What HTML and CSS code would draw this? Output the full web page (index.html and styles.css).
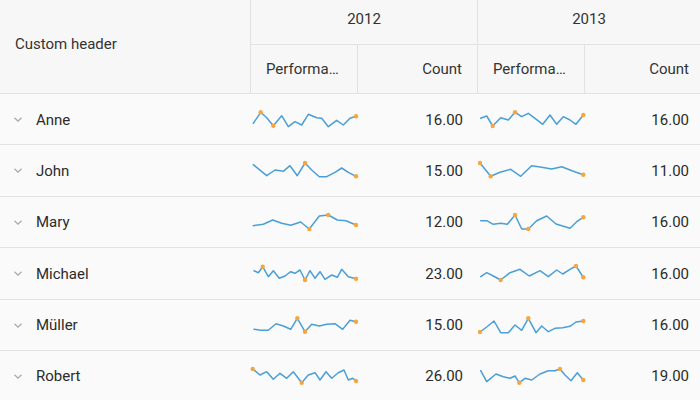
FILE: index.html
```html
<!DOCTYPE html>
<html>
<head>
<meta charset="utf-8">
<link rel="stylesheet" href="styles.css">
</head>
<body>
<div class="grid">
  <div class="head">
    <div class="hc corner">Custom header</div>
    <div class="hc year y1">2012</div>
    <div class="hc year y2">2013</div>
    <div class="hc sub left">Performance</div>
    <div class="hc sub right">Count</div>
    <div class="hc sub left">Performance</div>
    <div class="hc sub right last">Count</div>
  </div>
  <div class="body">
    <div class="row">
      <div class="name"><svg class="chev" width="8" height="5" viewBox="0 0 8 5"><path d="M0.5 0.8 L4 4.2 L7.5 0.8"/></svg><span>Anne</span></div>
      <div class="spark"><svg viewBox="1 1 107 51"><polyline points="3.3,30.3 10.7,19.3 16.7,24.7 23.3,32.7 31.7,22.7 38.3,33.7 45,28.7 51.7,32 58.3,21.3 66.7,24.7 71.7,25.3 78.3,33.7 86.7,27.3 93.3,32 100,25.3 106,23.3"/><circle cx="10.7" cy="19.3" r="2.2"/><circle cx="23.3" cy="32.7" r="2.2"/><circle cx="106" cy="23.3" r="2.2"/></svg></div>
      <div class="num">16.00</div>
      <div class="spark"><svg viewBox="1 1 107 51"><polyline points="3.7,25.3 9.7,23 15.7,33 23.7,24.7 31.3,27 38,19.3 44.7,23.7 51.3,20.3 58,25.3 65.7,31.3 73,22 79.7,31.3 86.3,23.7 93,27 99,31.3 106.3,22"/><circle cx="15.7" cy="33" r="2.2"/><circle cx="38" cy="19.3" r="2.2"/><circle cx="106.3" cy="22" r="2.2"/></svg></div>
      <div class="num last">16.00</div>
    </div>
    <div class="row">
      <div class="name"><svg class="chev" width="8" height="5" viewBox="0 0 8 5"><path d="M0.5 0.8 L4 4.2 L7.5 0.8"/></svg><span>John</span></div>
      <div class="spark"><svg viewBox="1 1 107 51"><polyline points="3.3,20.7 16.7,31.7 25,26 33.3,27.3 40,21.7 47.3,31.7 55,19 61.7,26 69.3,32.7 76.7,32.7 85,28.3 91.7,24 98.3,28.3 106,32.3"/><circle cx="55" cy="19" r="2.2"/><circle cx="106" cy="32.3" r="2.2"/></svg></div>
      <div class="num">15.00</div>
      <div class="spark"><svg viewBox="1 1 107 51"><polyline points="3,19 13.7,32.3 23,28.3 33.7,25.3 43.7,32.3 54.7,21.7 64.7,23.3 74.7,25 84.7,22.7 96.3,27.3 106.3,30.7"/><circle cx="3" cy="19" r="2.2"/><circle cx="13.7" cy="32.3" r="2.2"/><circle cx="106.3" cy="30.7" r="2.2"/></svg></div>
      <div class="num last">11.00</div>
    </div>
    <div class="row">
      <div class="name"><svg class="chev" width="8" height="5" viewBox="0 0 8 5"><path d="M0.5 0.8 L4 4.2 L7.5 0.8"/></svg><span>Mary</span></div>
      <div class="spark"><svg viewBox="1 1 107 51"><polyline points="3.3,29.7 13.3,28.3 22.7,24 31.7,27.3 40.7,29.3 50.7,26 59.3,33 69.3,20 78.3,19 87.3,24 96,24.7 106,29"/><circle cx="59.3" cy="33" r="2.2"/><circle cx="78.3" cy="19" r="2.2"/><circle cx="106" cy="29" r="2.2"/></svg></div>
      <div class="num">12.00</div>
      <div class="spark"><svg viewBox="1 1 107 51"><polyline points="3.7,24.7 9.7,24.7 16.3,28.3 23.7,27.3 30.3,28.3 38,19 44.7,33 51.3,33 59.7,24.7 69.7,20 79,28 93,32.3 99.7,25.7 106.3,21.3"/><circle cx="38" cy="19" r="2.2"/><circle cx="51.3" cy="33" r="2.2"/><circle cx="106.3" cy="21.3" r="2.2"/></svg></div>
      <div class="num last">16.00</div>
    </div>
    <div class="row">
      <div class="name"><svg class="chev" width="8" height="5" viewBox="0 0 8 5"><path d="M0.5 0.8 L4 4.2 L7.5 0.8"/></svg><span>Michael</span></div>
      <div class="spark"><svg viewBox="1 1 107 51"><polyline points="4,23.7 8.3,25.7 12.7,19.7 18.3,29.7 23.3,23.7 29.3,31.3 35,29 40.7,24.7 45,26.3 50,23 55,33 60,23.7 65,31.3 70,24.7 75,32.3 81.7,28 87.3,30.3 91.7,22.3 98.3,29.7 106,31.7"/><circle cx="12.7" cy="19.7" r="2.2"/><circle cx="55" cy="33" r="2.2"/><circle cx="106" cy="31.7" r="2.2"/></svg></div>
      <div class="num">23.00</div>
      <div class="spark"><svg viewBox="1 1 107 51"><polyline points="3.7,29.7 9.7,25.7 16.3,29 23.7,33 33,25.7 43,22.3 52.3,29 63,23.7 71.3,29.7 79.7,23 85.7,27 93,22.3 99,19 106.3,30.3"/><circle cx="23.7" cy="33" r="2.2"/><circle cx="99" cy="19" r="2.2"/><circle cx="106.3" cy="30.3" r="2.2"/></svg></div>
      <div class="num last">16.00</div>
    </div>
    <div class="row">
      <div class="name"><svg class="chev" width="8" height="5" viewBox="0 0 8 5"><path d="M0.5 0.8 L4 4.2 L7.5 0.8"/></svg><span>Müller</span></div>
      <div class="spark"><svg viewBox="1 1 107 51"><polyline points="4,30.3 10.7,31.3 18.3,31.3 26,24.7 33.3,27 40.7,30.3 47.3,19.3 55,32.7 61.7,25.3 69.3,27 76.7,25.3 85,24.7 92.7,30.3 100,21.3 106,22.7"/><circle cx="47.3" cy="19.3" r="2.2"/><circle cx="55" cy="32.7" r="2.2"/><circle cx="106" cy="22.7" r="2.2"/></svg></div>
      <div class="num">15.00</div>
      <div class="spark"><svg viewBox="1 1 107 51"><polyline points="3,33 9.7,28 17,22 23.7,33.7 31.3,33.7 38,26 44.7,31.3 51.3,19.3 59,33.7 64.7,27 71.3,32.7 78,29.3 85.7,28.7 93,27.3 99,23 106.3,22"/><circle cx="3" cy="33" r="2.2"/><circle cx="51.3" cy="19.3" r="2.2"/><circle cx="106.3" cy="22" r="2.2"/></svg></div>
      <div class="num last">16.00</div>
    </div>
    <div class="row">
      <div class="name"><svg class="chev" width="8" height="5" viewBox="0 0 8 5"><path d="M0.5 0.8 L4 4.2 L7.5 0.8"/></svg><span>Robert</span></div>
      <div class="spark"><svg viewBox="1 1 107 51"><polyline points="2.7,19 10,25 16.7,21.7 23.3,29.3 30,23.3 36.7,28.3 43.3,21.7 51.7,32.7 58.3,25 65,22.7 70,30 76,21.7 81.7,28.3 88.3,22.7 94,20 98.3,30 102.7,28.3 106,31"/><circle cx="2.7" cy="19" r="2.2"/><circle cx="51.7" cy="32.7" r="2.2"/><circle cx="106" cy="31" r="2.2"/></svg></div>
      <div class="num">26.00</div>
      <div class="spark"><svg viewBox="1 1 107 51"><polyline points="3.7,20.7 9.7,31.7 19,24 26.3,26.7 33,28.3 38,26 42.3,32.7 48,28.3 54.7,30 63,24 71.3,20.7 78,20.7 83,19 88,25 94,30.7 100.3,22.7 106.3,30"/><circle cx="42.3" cy="32.7" r="2.2"/><circle cx="83" cy="19" r="2.2"/><circle cx="106.3" cy="30" r="2.2"/></svg></div>
      <div class="num last">19.00</div>
    </div>
  </div>
</div>
</body>
</html>
```

FILE: styles.css
```css
* { box-sizing: border-box; }
html, body {
  margin: 0;
  padding: 0;
  width: 700px;
  height: 400px;
  overflow: hidden;
  background: #fafafa;
}
body {
  font-family: Roboto, "Noto Sans", sans-serif;
  font-size: 15px;
  color: #333333;
}
.grid {
  width: 700px;
}
.head {
  display: grid;
  grid-template-columns: 251px 107px 120px 107px 115px;
  grid-template-rows: 45px 49px;
  background: #f7f7f7;
  border-bottom: 0;
}
.hc {
  display: flex;
  align-items: center;
  border-bottom: 1px solid #e2e2e2;
  white-space: nowrap;
  overflow: hidden;
  color: #333333;
}
.corner {
  grid-row: 1 / 3;
  grid-column: 1;
  padding: 0 0 6px 15px;
  border-right: 1px solid #e2e2e2;
}
.year {
  justify-content: center;
  padding-bottom: 6px;
}
.y1 {
  grid-column: 2 / 4;
  border-right: 1px solid #e2e2e2;
}
.y2 {
  grid-column: 4 / 6;
}
.sub {
  padding: 0 15px;
}
.sub.left {
  display: block;
  line-height: 48px;
  text-overflow: ellipsis;
  border-right: 1px solid #e2e2e2;
}
.sub.right {
  justify-content: flex-end;
  border-right: 1px solid #e2e2e2;
}
.sub.right.last {
  border-right: 0;
  padding-right: 11px;
}
.row {
  display: grid;
  grid-template-columns: 251px 107px 120px 107px 115px;
  height: 51.4px;
  border-bottom: 1px solid #e2e2e2;
  background: #fafafa;
}
.name {
  display: flex;
  align-items: center;
  padding-left: 14px;
  gap: 14px;
  color: #2b2b2b;
}
.chev {
  display: block;
  fill: none;
  stroke: #a8a8a8;
  stroke-width: 1.2;
}
.spark svg {
  display: block;
  width: 107px;
  height: 51px;
  overflow: visible;
}
.spark polyline {
  fill: none;
  stroke: #4a9fd6;
  stroke-width: 1.5;
  stroke-linejoin: round;
  stroke-linecap: round;
}
.spark circle {
  fill: #f5a640;
}
.num {
  display: flex;
  align-items: center;
  justify-content: flex-end;
  padding-right: 15px;
  color: #2b2b2b;
}
.num.last {
  padding-right: 11px;
}
```
